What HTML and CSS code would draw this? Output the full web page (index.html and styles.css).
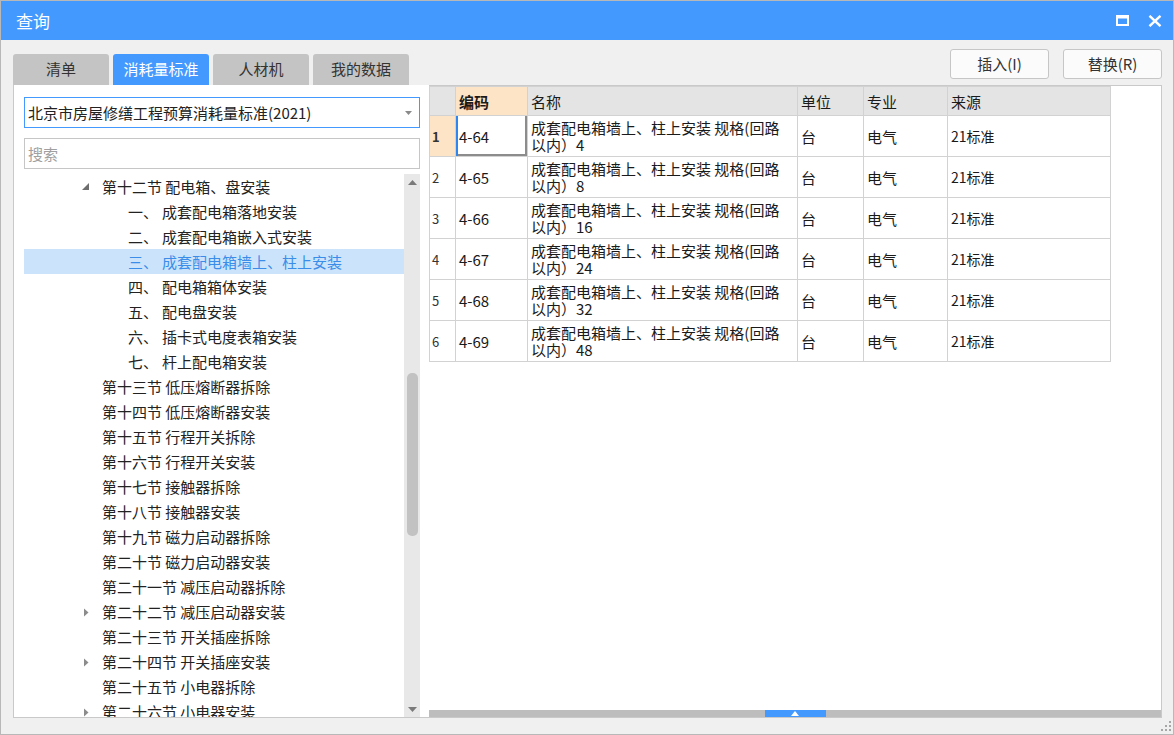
FILE: index.html
```html
<!DOCTYPE html>
<html lang="zh-CN">
<head>
<meta charset="utf-8">
<title>查询</title>
<link rel="stylesheet" href="styles.css">
</head>
<body>
<div class="window">
  <div class="titlebar">
    <span class="title">查询</span>
    <div class="ctrls">
      <svg class="ico" width="13" height="11" viewBox="0 0 13 11"><rect x="1" y="1.5" width="11" height="8.5" fill="none" stroke="#fff" stroke-width="2"/><rect x="0" y="0" width="13" height="3.5" fill="#fff"/></svg>
      <svg class="ico" width="14" height="12" viewBox="0 0 14 12"><path d="M1.5 0.8 L12.5 11.2 M12.5 0.8 L1.5 11.2" stroke="#fff" stroke-width="2.4" fill="none"/></svg>
    </div>
  </div>
  <div class="body">
    <div class="toolbar">
      <div class="tabs">
        <div class="tab">清单</div>
        <div class="tab active">消耗量标准</div>
        <div class="tab">人材机</div>
        <div class="tab">我的数据</div>
      </div>
      <div class="buttons">
        <button class="btn">插入(I)</button>
        <button class="btn">替换(R)</button>
      </div>
    </div>
    <div class="main">
      <div class="left">
        <div class="select">
          <span>北京市房屋修缮工程预算消耗量标准(2021)</span>
          <svg width="7" height="4" viewBox="0 0 7 4"><path d="M0 0 H7 L3.5 4 Z" fill="#8a8a8a"/></svg>
        </div>
        <div class="search">搜索</div>
        <div class="tree">
          <div class="tree-list">
            <div class="row l1"><span class="arw"><svg width="8" height="8" viewBox="0 0 8 8"><path d="M7 0 V7 H0 Z" fill="#6e6e6e"/></svg></span>第十二节 配电箱、盘安装</div>
            <div class="row l2"><span class="num">一、</span>成套配电箱落地安装</div>
            <div class="row l2"><span class="num">二、</span>成套配电箱嵌入式安装</div>
            <div class="row l2 sel"><span class="num">三、</span>成套配电箱墙上、柱上安装</div>
            <div class="row l2"><span class="num">四、</span>配电箱箱体安装</div>
            <div class="row l2"><span class="num">五、</span>配电盘安装</div>
            <div class="row l2"><span class="num">六、</span>插卡式电度表箱安装</div>
            <div class="row l2"><span class="num">七、</span>杆上配电箱安装</div>
            <div class="row l1"><span class="arw"></span>第十三节 低压熔断器拆除</div>
            <div class="row l1"><span class="arw"></span>第十四节 低压熔断器安装</div>
            <div class="row l1"><span class="arw"></span>第十五节 行程开关拆除</div>
            <div class="row l1"><span class="arw"></span>第十六节 行程开关安装</div>
            <div class="row l1"><span class="arw"></span>第十七节 接触器拆除</div>
            <div class="row l1"><span class="arw"></span>第十八节 接触器安装</div>
            <div class="row l1"><span class="arw"></span>第十九节 磁力启动器拆除</div>
            <div class="row l1"><span class="arw"></span>第二十节 磁力启动器安装</div>
            <div class="row l1"><span class="arw"></span>第二十一节 减压启动器拆除</div>
            <div class="row l1"><span class="arw"><svg width="8" height="9" viewBox="0 0 8 9"><path d="M2 0.5 L6.5 4.5 L2 8.5 Z" fill="#8c8c8c"/></svg></span>第二十二节 减压启动器安装</div>
            <div class="row l1"><span class="arw"></span>第二十三节 开关插座拆除</div>
            <div class="row l1"><span class="arw"><svg width="8" height="9" viewBox="0 0 8 9"><path d="M2 0.5 L6.5 4.5 L2 8.5 Z" fill="#8c8c8c"/></svg></span>第二十四节 开关插座安装</div>
            <div class="row l1"><span class="arw"></span>第二十五节 小电器拆除</div>
            <div class="row l1"><span class="arw"><svg width="8" height="9" viewBox="0 0 8 9"><path d="M2 0.5 L6.5 4.5 L2 8.5 Z" fill="#8c8c8c"/></svg></span>第二十六节 小电器安装</div>
          </div>
          <div class="vscroll">
            <div class="sbtn"><svg width="9" height="5" viewBox="0 0 9 5"><path d="M0 5 L4.5 0 L9 5 Z" fill="#7a7a7a"/></svg></div>
            <div class="strack"><div class="thumb"></div></div>
            <div class="sbtn"><svg width="9" height="5" viewBox="0 0 9 5"><path d="M0 0 L4.5 5 L9 0 Z" fill="#7a7a7a"/></svg></div>
          </div>
        </div>
      </div>
      <div class="right">
        <div class="grid-wrap">
          <table class="grid">
            <colgroup>
              <col class="c-no"><col class="c-code"><col class="c-name"><col class="c-unit"><col class="c-major"><col class="c-src">
            </colgroup>
            <thead>
              <tr><th></th><th class="hl">编码</th><th>名称</th><th>单位</th><th>专业</th><th>来源</th></tr>
            </thead>
            <tbody>
              <tr><td class="no cur">1</td><td class="focus">4-64</td><td>成套配电箱墙上、柱上安装 规格(回路<br>以内）4</td><td>台</td><td>电气</td><td class="src">21标准</td></tr>
              <tr><td class="no">2</td><td>4-65</td><td>成套配电箱墙上、柱上安装 规格(回路<br>以内）8</td><td>台</td><td>电气</td><td class="src">21标准</td></tr>
              <tr><td class="no">3</td><td>4-66</td><td>成套配电箱墙上、柱上安装 规格(回路<br>以内）16</td><td>台</td><td>电气</td><td class="src">21标准</td></tr>
              <tr><td class="no">4</td><td>4-67</td><td>成套配电箱墙上、柱上安装 规格(回路<br>以内）24</td><td>台</td><td>电气</td><td class="src">21标准</td></tr>
              <tr><td class="no">5</td><td>4-68</td><td>成套配电箱墙上、柱上安装 规格(回路<br>以内）32</td><td>台</td><td>电气</td><td class="src">21标准</td></tr>
              <tr><td class="no">6</td><td>4-69</td><td>成套配电箱墙上、柱上安装 规格(回路<br>以内）48</td><td>台</td><td>电气</td><td class="src">21标准</td></tr>
            </tbody>
          </table>
        </div>
        <div class="splitter"><div class="handle"><svg width="8" height="5" viewBox="0 0 8 5"><path d="M0 5 L4 0 L8 5 Z" fill="#fff"/></svg></div></div>
      </div>
    </div>
    <div class="status">
      <svg width="11" height="12" viewBox="0 0 11 12"><g fill="#a6a6a6"><rect x="8" y="0" width="2" height="2"/><rect x="4" y="4" width="2" height="2"/><rect x="8" y="4" width="2" height="2"/><rect x="0" y="8" width="2" height="2"/><rect x="4" y="8" width="2" height="2"/><rect x="8" y="8" width="2" height="2"/></g></svg>
    </div>
  </div>
</div>
</body>
</html>
```

FILE: styles.css
```css
* { box-sizing: border-box; }
html, body { margin: 0; padding: 0; }
body {
  width: 1174px;
  height: 735px;
  overflow: hidden;
  background: #f0f0f0;
  font-family: "Noto Sans CJK SC", "Microsoft YaHei", sans-serif;
  color: #222;
}
.window {
  width: 1174px;
  height: 735px;
  border: 1px solid #b8b8b8;
  display: flex;
  flex-direction: column;
  background: #f0f0f0;
}
.titlebar {
  height: 39px;
  flex: none;
  background: #4499ff;
  color: #fff;
  display: flex;
  align-items: center;
  justify-content: space-between;
  padding: 0 11px 0 15px;
}
.title { font-size: 17px; line-height: 20px; }
.ctrls { display: flex; align-items: center; gap: 19px; }
.ico { display: block; }

.body {
  flex: 1;
  display: flex;
  flex-direction: column;
  padding: 9px 11px 0 12px;
}
.toolbar {
  height: 36px;
  flex: none;
  display: flex;
  justify-content: space-between;
}
.tabs { display: flex; gap: 4px; align-self: flex-end; }
.tab {
  width: 96px;
  height: 31px;
  background: #c4c4c4;
  border-radius: 3px 3px 0 0;
  font-size: 15px;
  line-height: 20px;
  padding-bottom: 1px;
  color: #333;
  display: flex;
  align-items: center;
  justify-content: center;
}
.tab.active { background: #4499ff; color: #fff; }
.buttons { display: flex; gap: 14px; align-self: flex-start; }
.btn {
  width: 99px;
  height: 30px;
  border: 1px solid #c6c6c6;
  border-radius: 3px;
  background: #fbfbfb;
  font-family: inherit;
  font-size: 15px;
  color: #333;
  padding: 0 0 2px 0;
}

.main {
  height: 633px;
  flex: none;
  display: flex;
}
.left {
  width: 416px;
  flex: none;
  background: #fff;
  border-left: 1px solid #c9c9c9;
  border-bottom: 1px solid #c9c9c9;
  padding: 12px 0 0 10px;
  display: flex;
  flex-direction: column;
}
.select {
  width: 396px;
  height: 31px;
  flex: none;
  border: 1px solid #4499ff;
  background: #fff;
  display: flex;
  align-items: center;
  justify-content: space-between;
  padding: 0 7px 0 3px;
  font-size: 15px;
  color: #222;
}
.select svg { display: block; }
.search {
  width: 396px;
  height: 31px;
  flex: none;
  margin-top: 10px;
  border: 1px solid #c6c6c6;
  display: flex;
  align-items: center;
  padding-left: 3px;
  font-size: 15px;
  color: #a0a0a0;
}
.tree {
  width: 396px;
  margin-top: 5px;
  flex: 1;
  min-height: 0;
  display: flex;
}
.tree-list {
  flex: 1;
  overflow: hidden;
}
.row {
  height: 25px;
  display: flex;
  align-items: center;
  font-size: 15px;
  color: #222;
  white-space: nowrap;
}
.row.l1 { padding-left: 58px; }
.row.l2 { padding-left: 104px; }
.arw {
  width: 20px;
  flex: none;
  display: flex;
  align-items: center;
  padding-top: 1px;
}
.arw svg { display: block; }
.num { width: 34px; flex: none; }
.row.sel { background: #cce4fb; color: #3a8de8; }

.vscroll {
  width: 16px;
  flex: none;
  background: #e8e8e8;
  display: flex;
  flex-direction: column;
}
.sbtn {
  height: 16px;
  flex: none;
  display: flex;
  align-items: center;
  justify-content: center;
}
.sbtn svg { display: block; }
.strack {
  flex: 1;
  padding: 183px 2px 0 3px;
}
.thumb {
  height: 163px;
  background: #c2c2c2;
  border-radius: 5px;
}

.right {
  flex: 1;
  background: #fff;
  border: 1px solid #c9c9c9;
  border-left: none;
  display: flex;
  flex-direction: column;
}
.grid-wrap { flex: 1; }
.grid {
  border-collapse: collapse;
  table-layout: fixed;
  width: 681px;
  font-size: 15px;
}
.c-no { width: 26px; }
.c-code { width: 72px; }
.c-name { width: 270px; }
.c-unit { width: 66px; }
.c-major { width: 84px; }
.c-src { width: 163px; }
.grid th, .grid td {
  border: 1px solid #d2d2d2;
  padding: 0 3px;
  text-align: left;
  vertical-align: middle;
  color: #1a1a1a;
}
.grid th {
  height: 29px;
  background: #e4e4e4;
  font-weight: normal;
  font-size: 15px;
}
.grid th.hl { background: #fde4c6; font-weight: bold; }
.grid td {
  height: 41px;
  line-height: 17px;
  font-size: 15px;
  white-space: nowrap;
}
.grid td.no { font-size: 13px; color: #333; padding-left: 2px; }
.grid td.no.cur { background: #fde4c6; font-weight: bold; }
.grid td.focus { box-shadow: inset 2px 0 0 #2f86f0, inset -2px -2px 0 #8c8c8c; }
.grid td.src { font-size: 14px; }

.splitter {
  height: 7px;
  flex: none;
  background: #bdbdbd;
  display: flex;
  justify-content: center;
}
.handle {
  width: 61px;
  background: #4499ff;
  display: flex;
  align-items: center;
  justify-content: center;
}
.handle svg { display: block; }

.status {
  flex: 1;
  display: flex;
  justify-content: flex-end;
  align-items: flex-end;
  padding: 0 0 1px 0;
  margin-right: -10px;
}
.status svg { display: block; }
```
